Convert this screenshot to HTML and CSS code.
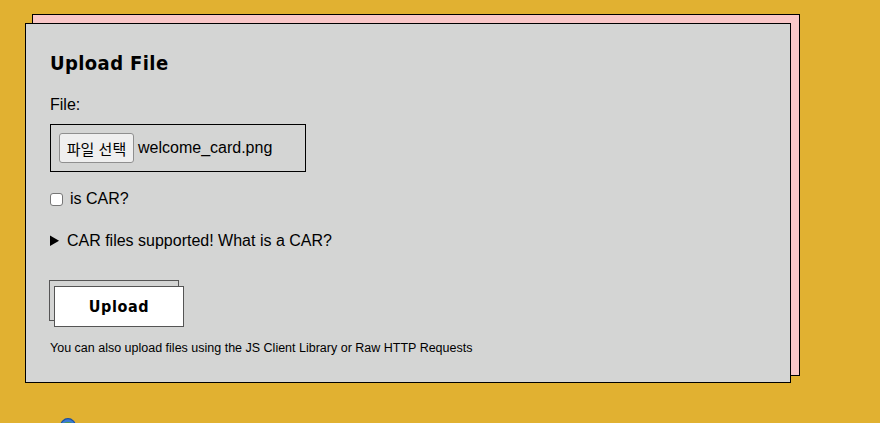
FILE: index.html
```html
<!DOCTYPE html>
<html lang="ko">
<head>
<meta charset="utf-8">
<title>Upload File</title>
<link rel="stylesheet" href="styles.css">
</head>
<body>
<main class="page">
  <div class="frame">
    <section class="card">
      <h1 class="title">Upload File</h1>
      <div class="field-label">File:</div>
      <div class="file-box">
        <button class="file-btn" type="button">파일 선택</button>
        <span class="file-name">welcome_card.png</span>
      </div>
      <label class="check-row">
        <input type="checkbox" class="check">
        <span>is CAR?</span>
      </label>
      <details class="car-details">
        <summary>CAR files supported! What is a CAR?</summary>
      </details>
      <div class="upload-wrap">
        <button class="upload-btn" type="button">Upload</button>
      </div>
      <p class="note">You can also upload files using the JS Client Library or Raw HTTP Requests</p>
    </section>
  </div>
  <div class="logo-row">
    <svg class="logo" width="16" height="16" viewBox="0 0 16 16">
      <circle cx="8" cy="8" r="7.5" fill="#3a7bd5"/>
      <path d="M2 6 Q8 2 14 6 L14 11 L2 11 Z" fill="#4f9a4a"/>
      <circle cx="8" cy="8" r="7.3" fill="none" stroke="#1c4f9c" stroke-width="1.2"/>
    </svg>
  </div>
</main>
</body>
</html>
```

FILE: styles.css
```css
html, body {
  margin: 0;
  padding: 0;
}
body {
  background: #e1b131;
  font-family: "Liberation Sans", Arial, "Noto Sans CJK KR", sans-serif;
  color: #000;
  overflow: hidden;
  height: 423px;
}
.page {
  padding: 14px 0 0 32px;
}
.frame {
  width: 766px;
  background: #f9c7c8;
  border: 1px solid #000;
  padding-top: 8px;
}
.card {
  box-sizing: border-box;
  width: 766px;
  height: 360px;
  margin-left: -8px;
  margin-bottom: -8px;
  background: #d4d5d4;
  border: 1px solid #000;
  padding: 24px 24px;
}
.title {
  margin: 0;
  font-family: "DejaVu Sans Condensed", "DejaVu Sans", sans-serif;
  font-stretch: condensed;
  font-weight: bold;
  font-size: 20px;
  letter-spacing: 0.4px;
  line-height: 30px;
}
.field-label {
  margin-top: 17px;
  font-size: 16px;
  line-height: 20px;
}
.file-box {
  box-sizing: border-box;
  margin-top: 9px;
  width: 256px;
  height: 48px;
  border: 1px solid #000;
  display: flex;
  align-items: center;
  padding-left: 8px;
  gap: 4px;
}
.file-btn {
  box-sizing: border-box;
  height: 30px;
  width: 75px;
  padding: 0;
  background: #efefef;
  border: 1px solid #8f8f8f;
  border-radius: 3px;
  font-family: "Noto Sans CJK KR", sans-serif;
  font-size: 15px;
  color: #000;
}
.file-name {
  font-size: 16px;
}
.check-row {
  display: flex;
  align-items: center;
  gap: 7px;
  margin-top: 18px;
  font-size: 16px;
  line-height: 18px;
}
.check {
  appearance: none;
  -webkit-appearance: none;
  margin: 0;
  width: 13px;
  height: 13px;
  background: #fff;
  border: 1px solid #767676;
  border-radius: 3px;
}
.car-details {
  margin-top: 24px;
  font-size: 16px;
  line-height: 18px;
}
.car-details summary {
  cursor: pointer;
}
.upload-wrap {
  margin-top: 30px;
  padding-left: 4px;
  height: 46px;
}
.upload-btn {
  box-sizing: border-box;
  margin-top: 6px;
  width: 130px;
  height: 41px;
  background: #fff;
  border: 1px solid #555;
  font-family: "DejaVu Sans Condensed", "DejaVu Sans", sans-serif;
  font-stretch: condensed;
  font-weight: bold;
  font-size: 16px;
  letter-spacing: 0.6px;
  color: #000;
  box-shadow: -5px -6px 0 -1px #d4d5d4, -5px -6px 0 0 #555;
}
.note {
  margin: 15px 0 0;
  font-size: 12.5px;
  line-height: 14px;
}
.logo-row {
  padding: 42px 0 0 28px;
}
.logo {
  display: block;
}
```
